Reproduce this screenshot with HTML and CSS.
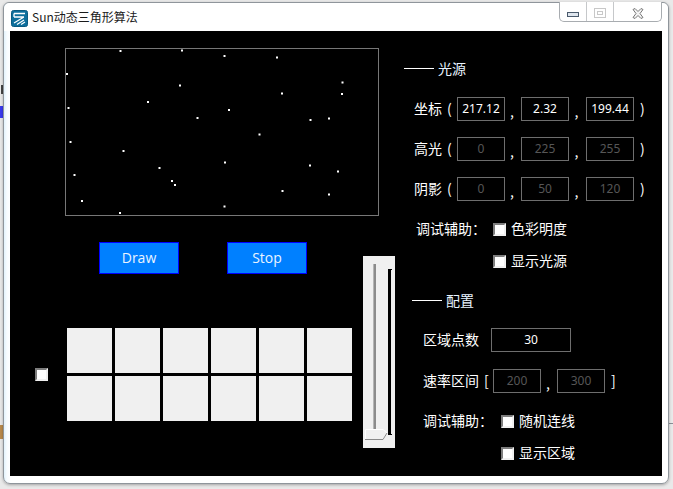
FILE: index.html
```html
<!DOCTYPE html>
<html lang="zh">
<head>
<meta charset="utf-8">
<title>Sun动态三角形算法</title>
<link rel="stylesheet" href="styles.css">
</head>
<body>
<div class="desk-bit bit-a"></div>
<div class="desk-bit bit-b"></div>
<div class="desk-bit bit-c"></div>
<div class="desk-bit bit-e"></div>
<div class="window">
  <div class="titlebar">
    <svg class="app-icon" width="17" height="17" viewBox="0 0 17 17">
      <rect x="0.5" y="0.5" width="16" height="16" rx="2" fill="#0e6f9c" stroke="#0a5a80"/>
      <path d="M3 3.5H14M3 3.5V7M3 7H13M13 7L3 13M13 10L6 14.5M14 12L10 14.5" fill="none" stroke="#fff" stroke-width="1.3"/>
    </svg>
    <span class="title">Sun动态三角形算法</span>
    <div class="caption">
      <div class="cap-btn cap-min"><svg width="13" height="6" viewBox="0 0 13 6"><rect x="0.5" y="0.5" width="11" height="4" fill="#dfe6ee" stroke="#4a5a6c"/></svg></div>
      <div class="cap-btn cap-max"><svg width="13" height="11" viewBox="0 0 13 11"><rect x="0.5" y="0.5" width="11" height="9" fill="none" stroke="#c8c8c8"/><rect x="3.5" y="3.5" width="5" height="3" fill="none" stroke="#c8c8c8"/></svg></div>
      <div class="cap-btn cap-close"><svg width="12" height="11" viewBox="0 0 12 11"><path d="M1 1.5L3 .5L6 3.5L9 .5L11 1.5L8 5.5L11 9.500L9 10.500L6 7.500L3 10.500L1 9.500L4 5.500Z" fill="#f4f4f4" stroke="#777"/></svg></div>
    </div>
  </div>
  <div class="client">
    <div class="left">
      <svg class="canvas" width="314" height="168" viewBox="65 48 314 168">
        <rect class="frame" x="65.500" y="48.500" width="313" height="167"/>
        <g class="stars">
          <rect x="119.500" y="50" width="2" height="2"/><rect x="181" y="49.500" width="2" height="2"/>
          <rect x="223.500" y="55" width="2" height="2"/><rect x="66" y="73" width="2" height="2"/>
          <rect x="179" y="84.500" width="2" height="2"/><rect x="147" y="101" width="2" height="2"/>
          <rect x="67.500" y="107" width="2" height="2"/><rect x="228" y="109" width="2" height="2"/>
          <rect x="196.500" y="117" width="2" height="2"/><rect x="69.500" y="141" width="2" height="2"/>
          <rect x="122.500" y="150" width="2" height="2"/><rect x="158.500" y="167" width="2" height="2"/>
          <rect x="224" y="161.500" width="2" height="2"/><rect x="73.500" y="174" width="2" height="2"/>
          <rect x="171" y="180" width="2" height="2"/><rect x="174" y="184" width="2" height="2"/>
          <rect x="81" y="200" width="2" height="2"/><rect x="119" y="212" width="2" height="2"/>
          <rect x="223.500" y="205.500" width="2" height="2"/><rect x="276" y="56.500" width="2" height="2"/>
          <rect x="341.500" y="81.500" width="2" height="2"/><rect x="281" y="92.500" width="2" height="2"/>
          <rect x="341" y="93" width="2" height="2"/><rect x="309.500" y="119" width="2" height="2"/>
          <rect x="328" y="117.500" width="2" height="2"/><rect x="258.500" y="133.500" width="2" height="2"/>
          <rect x="309" y="164.500" width="2" height="2"/><rect x="337" y="170.500" width="2" height="2"/>
          <rect x="281.500" y="190" width="2" height="2"/><rect x="328" y="193.500" width="2" height="2"/>
        </g>
      </svg>
      <div class="lower">
        <div class="lower-main">
          <div class="buttons">
            <button class="btn">Draw</button>
            <button class="btn">Stop</button>
          </div>
          <div class="grid-row">
            <span class="check"></span>
            <div class="cells">
              <div class="cell"></div><div class="cell"></div><div class="cell"></div><div class="cell"></div><div class="cell"></div><div class="cell"></div>
              <div class="cell"></div><div class="cell"></div><div class="cell"></div><div class="cell"></div><div class="cell"></div><div class="cell"></div>
            </div>
          </div>
        </div>
        <div class="slider">
          <svg width="32" height="192" viewBox="0 0 32 192">
            <rect x="10" y="8" width="3" height="168" fill="#8c8c8c"/>
            <rect x="10" y="8" width="1" height="168" fill="#b5b5b5"/>
            <path d="M25 13H29V14H28V178H29V179H25Z" fill="#000"/>
            <path d="M2.500 173.500H20L24 177L20 183.500H2.500Z" fill="#f0f0f0" stroke="#fff"/>
            <path d="M2 183.500H20L24 177" fill="none" stroke="#8a8a8a"/>
          </svg>
        </div>
      </div>
    </div>
    <div class="right">
      <div class="heading heading-light"><span class="rule"></span>光源</div>
      <div class="row row-first row-light">
        <span class="label">坐标</span><span class="open">(</span>
        <span class="field">217.12</span><span class="sep">,</span>
        <span class="field">2.32</span><span class="sep sep-wide">,</span>
        <span class="field">199.44</span><span class="close">)</span>
      </div>
      <div class="row row-light">
        <span class="label">高光</span><span class="open">(</span>
        <span class="field dim">0</span><span class="sep">,</span>
        <span class="field dim">225</span><span class="sep sep-wide">,</span>
        <span class="field dim">255</span><span class="close">)</span>
      </div>
      <div class="row row-light">
        <span class="label">阴影</span><span class="open">(</span>
        <span class="field dim">0</span><span class="sep">,</span>
        <span class="field dim">50</span><span class="sep sep-wide">,</span>
        <span class="field dim">120</span><span class="close">)</span>
      </div>
      <div class="opt opt-first opt-light">
        <span class="opt-label">调试辅助<span class="colon">：</span></span><span class="check"></span><span class="opt-text">色彩明度</span>
      </div>
      <div class="opt opt-next opt-light">
        <span class="opt-label"></span><span class="check"></span><span class="opt-text">显示光源</span>
      </div>
      <div class="heading heading-config"><span class="rule"></span>配置</div>
      <div class="row row-config">
        <span class="label-long">区域点数</span><span class="field field-wide">30</span>
      </div>
      <div class="row row-config">
        <span class="label-rate">速率区间</span><span class="open-rate">[</span>
        <span class="field dim">200</span><span class="sep">,</span>
        <span class="field dim">300</span><span class="close">]</span>
      </div>
      <div class="opt opt-first opt-config">
        <span class="opt-label">调试辅助<span class="colon">：</span></span><span class="check"></span><span class="opt-text">随机连线</span>
      </div>
      <div class="opt opt-next opt-config">
        <span class="opt-label"></span><span class="check"></span><span class="opt-text">显示区域</span>
      </div>
    </div>
  </div>
</div>
</body>
</html>
```
FILE: styles.css
```css
* { box-sizing: border-box; }
html, body { margin: 0; padding: 0; }
body {
  width: 673px;
  height: 489px;
  overflow: hidden;
  position: relative;
  background: #e9e9e9;
  font-family: "Noto Sans CJK SC", "Noto Sans", sans-serif;
  color: #fff;
}
.desk-bit { position: absolute; }
.bit-a { left: 1px; top: 85px; width: 2px; height: 9px; background: #444; }
.bit-b { left: 0; top: 106px; width: 3px; height: 12px; background: #3a3aee; }
.bit-c { left: 0; top: 425px; width: 3px; height: 14px; background: #b98a4c; }
.bit-e { left: 669px; top: 423px; width: 4px; height: 1px; background: #8a8f96; }

.window {
  position: absolute;
  left: 3px;
  top: 2px;
  width: 666px;
  height: 482px;
  background: linear-gradient(90deg, #e2f2fb, #f8fcff 3px, #fff 7px);
  border: 1px solid #8f959b;
  border-radius: 6px 6px 7px 7px;
  box-shadow: 0 1px 3px rgba(0, 0, 0, .3);
  display: flex;
  flex-direction: column;
}
.titlebar {
  height: 28px;
  flex: none;
  display: flex;
  align-items: center;
  padding-left: 7px;
  position: relative;
  background: #fff;
  border-radius: 6px 6px 0 0;
}
.app-icon { flex: none; margin-top: 2px; }
.title {
  margin-left: 4px;
  font-size: 12px;
  line-height: 16px;
  color: #1a1a1a;
  white-space: nowrap;
}
.caption {
  position: absolute;
  left: 555px;
  top: -1px;
  width: 103px;
  height: 20px;
  display: flex;
  background: #fff;
  border: 1px solid #a8acb0;
  border-top: 0;
  border-radius: 0 0 5px 5px;
}
.cap-btn { display: flex; align-items: center; justify-content: center; height: 19px; }
.cap-min { width: 27px; border-right: 1px solid #c6c8ca; padding-top: 6px; }
.cap-max { width: 27px; border-right: 1px solid #c6c8ca; padding-top: 4px; }
.cap-close { flex: 1; padding-top: 4px; }

.client {
  margin-left: 6px;
  width: 652px;
  height: 445px;
  flex: none;
  background: #000;
  display: flex;
}
.left { width: 385px; flex: none; }
.canvas { display: block; margin: 17px 0 0 55px; overflow: visible; }
.frame { fill: none; stroke: #777; }
.stars { fill: #fff; }
.lower { display: flex; margin-top: 26px; }
.lower-main { width: 343px; flex: none; }
.buttons { display: flex; gap: 48px; padding-left: 89px; }
.btn {
  width: 80px;
  height: 32px;
  margin: 0;
  padding: 0 0 2px;
  background: #0080ff;
  border: 1px solid #0000ff;
  color: #eaf4ff;
  font-family: "Open Sans", "Noto Sans", sans-serif;
  font-size: 14px;
}
.grid-row { display: flex; align-items: center; margin-top: 54px; padding-left: 25px; }
.grid-row .check { margin-right: 19px; }
.cells { display: grid; grid-template-columns: repeat(6, 45px); grid-auto-rows: 45px; gap: 3px; }
.cell { background: #f0f0f0; }
.slider { width: 32px; height: 192px; margin: 14px 0 0 10px; background: #f0f0f0; flex: none; }
.slider svg { display: block; }

.check {
  display: block;
  width: 13px;
  height: 13px;
  flex: none;
  background: #fff;
  border: 2px solid;
  border-color: #7d7d7d #f0f0f0 #f0f0f0 #7d7d7d;
}

.right { flex: 1; font-size: 14px; line-height: 20px; }
.heading { display: flex; align-items: center; height: 20px; padding-bottom: 2px; color: #e8f4ff; }
.heading-light { margin: 28px 0 0 9px; }
.heading-config { margin: 20px 0 0 17px; }
.rule { width: 30px; height: 1px; background: #fff; margin-right: 4px; }
.row { display: flex; align-items: center; height: 24px; margin-top: 16px; }
.row-light { margin-left: 19px; }
.row-first { margin-top: 18px; }
.row-config { margin-left: 28px; margin-top: 17px; }
.label, .open, .close, .label-long, .label-rate, .open-rate, .opt-label, .opt-text { padding-bottom: 2px; }
.label { width: 33px; }
.open { width: 10px; }
.close { margin-left: 6px; }
.sep { width: 16px; padding: 4px 2px 0 0; text-align: center; }
.sep-wide { width: 17px; }
.field {
  width: 48px;
  height: 24px;
  flex: none;
  border: 1px solid #6e6e6e;
  font-family: "Noto Sans", sans-serif;
  font-size: 12px;
  line-height: 21px;
  text-align: center;
  color: #fff;
}
.dim { color: #565656; }
.field-wide { width: 80px; }
.label-long { width: 68px; }
.label-rate { width: 61px; }
.open-rate { width: 9px; }
.opt { display: flex; align-items: center; height: 20px; }
.opt-first { margin-top: 18px; }
.opt-next { margin-top: 12px; }
.opt-light { margin-left: 21px; }
.opt-light .opt-label { width: 77px; }
.opt-config { margin-left: 28px; }
.opt-config .opt-label { width: 78px; }
.opt-text { margin-left: 5px; }
.colon { font-family: "Noto Sans CJK TC", sans-serif; }
```
